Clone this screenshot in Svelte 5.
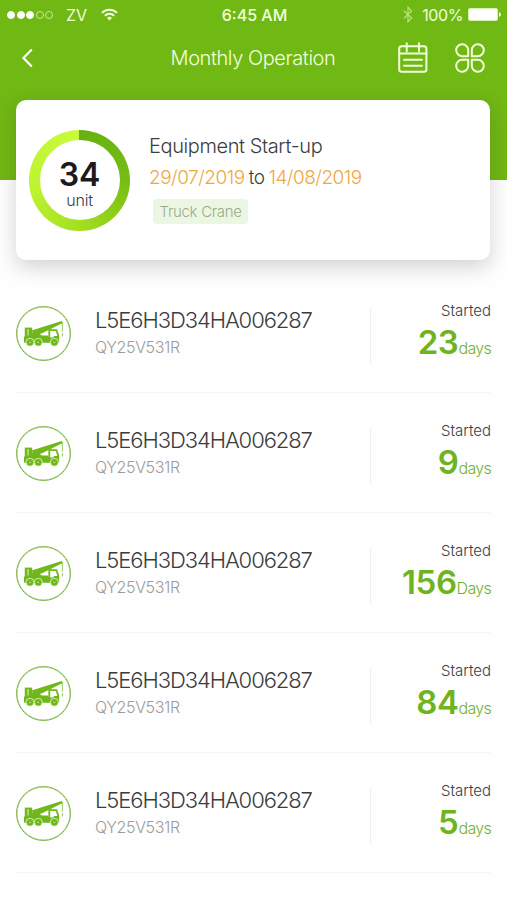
<script lang="ts">
	type Machine = { serial: string; model: string; count: number; unit: string };

	const serial = 'L5E6H3D34HA006287';
	const model = 'QY25V531R';

	let machines: Machine[] = [
		{ serial, model, count: 23, unit: 'days' },
		{ serial, model, count: 9, unit: 'days' },
		{ serial, model, count: 156, unit: 'Days' },
		{ serial, model, count: 84, unit: 'days' },
		{ serial, model, count: 5, unit: 'days' }
	];

	let signal = [true, true, true, false, false];
</script>

<main>
	<header>
		<div class="status">
			<div class="carrier">
				<div class="signal">
					{#each signal as on}
						<i class:on></i>
					{/each}
				</div>
				<span class="name">ZV</span>
				<svg width="17" height="13" viewBox="0 0 17 13" fill="none" stroke="#f2ffdf" stroke-width="2">
					<path d="M1 4.8a10.6 10.6 0 0 1 15 0" />
					<path d="M3.9 7.7a6.5 6.5 0 0 1 9.2 0" />
					<path d="M8.5 12.4 6 9.9a3.6 3.6 0 0 1 5 0z" fill="#f2ffdf" stroke="none" />
				</svg>
			</div>
			<span class="time">6:45 AM</span>
			<div class="power">
				<svg class="bluetooth" width="10" height="17" viewBox="0 0 10 17" fill="none" stroke="#b9e284" stroke-width="1.2">
					<path d="M1 4.7 8.6 12 5 15.8V1.2L8.6 5 1 12.3" />
				</svg>
				<span class="percent">100%</span>
				<svg width="34" height="13" viewBox="0 0 34 13">
					<rect x="0.5" y="0.5" width="29" height="12" rx="1.5" fill="#fff" stroke="#d6f0b0" />
					<path d="M31 4.2c2.4.4 2.4 4.2 0 4.6z" fill="#fff" />
				</svg>
			</div>
		</div>

		<nav>
			<svg class="back" width="12" height="20" viewBox="0 0 12 20" fill="none" stroke="#fff" stroke-width="2.2">
				<path d="M10.8 1.6 2.5 10l8.3 8.4" />
			</svg>
			<h1>Monthly Operation</h1>
			<div class="actions">
				<svg width="30" height="32" viewBox="0 0 30 32" fill="none" stroke="#f1ffdb" stroke-width="2" stroke-linecap="round">
					<rect x="1.2" y="4.2" width="27.2" height="25.6" rx="2.5" />
					<path d="M1.2 11.5h27.2M8.7 1.2v8M21 1.2v8M6 17.8h18M6 23.8h18" />
				</svg>
				<svg width="30" height="30" viewBox="0 0 30 30" fill="none" stroke="#f1ffdb" stroke-width="2" stroke-linejoin="round">
					<path d="M13.2 13.2H7.4a6 6 0 1 1 5.8-6z" />
					<path d="M16.8 13.2h5.8a6 6 0 1 0-5.8-6z" />
					<path d="M13.2 16.8H7.4a6 6 0 1 0 5.8 6z" />
					<path d="M16.8 16.8h5.8a6 6 0 1 1-5.8 6z" />
				</svg>
			</div>
		</nav>
	</header>

	<section class="card">
		<div class="ring">
			<div class="inner">
				<strong>34</strong>
				<span>unit</span>
			</div>
		</div>
		<div class="summary">
			<h2>Equipment Start-up</h2>
			<p class="range"><span class="date">29/07/2019</span><span class="to">to</span><span class="date">14/08/2019</span></p>
			<span class="tag">Truck Crane</span>
		</div>
	</section>

	<ul>
		{#each machines as machine}
			<li>
				<div class="avatar">
					<svg width="42" height="28" viewBox="0 0 42 28" fill="#6fb818">
						<!-- boom and hook -->
						<path d="M8.5 10.4 38.8 1l1 2L18.5 13.6l-6.5 1.6z" />
						<path d="M39.4 2.4v9.4M39.4 13v3.4" fill="none" stroke="#8cc850" stroke-width="0.9" />
						<!-- counterweight and chassis -->
						<path d="M1.8 7.6h7.4v10.9H1.8z" />
						<path d="M5 9v6.5" fill="none" stroke="#fff" stroke-width="0.8" />
						<path d="M9 12.5h5.5l4.5 3h6v7.3H1V16.5h8z" />
						<path d="M25.4 9.2H34l2.2 6.4v7.2H24.5v-6.3h.9z" />
						<path d="M27.2 10.9h5.6l1.6 5.1h-3.2l-1.2 1.4h-2.8z" fill="#fff" />
						<g stroke="#fff" stroke-width="0.7">
							<circle cx="7" cy="22.3" r="4" />
							<circle cx="15.3" cy="22.3" r="4" />
							<circle cx="31.4" cy="22.3" r="4" />
						</g>
						<g fill="#b9de8c">
							<circle cx="7" cy="22.3" r="0.9" />
							<circle cx="15.3" cy="22.3" r="0.9" />
							<circle cx="31.4" cy="22.3" r="0.9" />
						</g>
					</svg>
				</div>
				<div class="info">
					<span class="serial">{machine.serial}</span>
					<span class="model">{machine.model}</span>
				</div>
				<div class="started">
					<span class="label">Started</span>
					<p class="count"><b>{machine.count}</b><span>{machine.unit}</span></p>
				</div>
			</li>
		{/each}
	</ul>
</main>

<style>
	:global(body) {
		background: #fff;
	}

	main {
		width: 507px;
		height: 900px;
		overflow: hidden;
		font-family: Inter, 'Liberation Sans', sans-serif;
		font-weight: 300;
		color: #3c3c3c;
		background: #fefefe;
	}
	h1,
	h2,
	p,
	ul {
		margin: 0;
		padding: 0;
		font-weight: 300;
	}
	svg {
		display: block;
		flex: none;
	}
	span {
		white-space: nowrap;
	}

	header {
		height: 180px;
		background: #70b814;
		color: #f0ffdc;
	}
	.status {
		display: grid;
		grid-template-columns: 1fr auto 1fr;
		align-items: center;
		height: 29px;
		padding: 0 5px 0 7px;
	}
	.carrier,
	.power {
		display: flex;
		align-items: center;
	}
	.power {
		justify-content: flex-end;
	}
	.signal {
		display: flex;
		gap: 1.5px;
	}
	.signal i {
		box-sizing: border-box;
		width: 8px;
		height: 8px;
		border: 1px solid #c8eb9b;
		border-radius: 50%;
	}
	.signal .on {
		border-color: #fff;
		background: #fff;
	}
	.name {
		margin: 0 14px 0 13px;
		font-size: 16px;
		font-weight: 400;
	}
	.time {
		font-size: 16px;
		font-weight: 500;
	}
	.bluetooth {
		margin-right: 9px;
	}
	.percent {
		margin-right: 5px;
		font-size: 16px;
		font-weight: 400;
		letter-spacing: -0.4px;
	}

	nav {
		display: grid;
		grid-template-columns: 1fr auto 1fr;
		align-items: center;
		height: 58px;
		padding: 0 22px 0 21px;
	}
	h1 {
		font-size: 20px;
		line-height: 24px;
		letter-spacing: -0.43px;
	}
	.actions {
		display: flex;
		align-items: center;
		justify-content: flex-end;
		gap: 27px;
	}

	.card {
		position: relative;
		display: flex;
		align-items: center;
		box-sizing: border-box;
		width: 474px;
		height: 160px;
		margin: -80px 0 0 16px;
		padding-left: 13px;
		border-radius: 10px;
		background: #fff;
		box-shadow: 0 7px 20px rgba(50, 30, 40, 0.2);
	}
	.ring {
		display: flex;
		align-items: center;
		justify-content: center;
		width: 101px;
		height: 101px;
		border-radius: 50%;
		background: conic-gradient(#66b011, #76bd14 25%, #a4df20 50%, #bdf32f 72%, #c9fb3c);
	}
	.inner {
		display: flex;
		flex-direction: column;
		align-items: center;
		justify-content: center;
		box-sizing: border-box;
		width: 80px;
		height: 80px;
		padding-top: 7px;
		border-radius: 50%;
		background: #fff;
	}
	.inner strong {
		font-size: 32px;
		font-weight: 600;
		line-height: 32px;
		color: #1c1a1d;
	}
	.inner span {
		font-size: 16px;
		line-height: 18px;
		letter-spacing: -0.2px;
	}
	.summary {
		padding-left: 19px;
	}
	h2 {
		font-size: 20px;
		line-height: 24px;
		letter-spacing: -0.4px;
	}
	.range {
		display: flex;
		gap: 4px;
		margin-top: 8px;
		font-size: 19px;
		line-height: 24px;
		letter-spacing: -0.5px;
	}
	.date {
		color: #f0a741;
	}
	.tag {
		display: block;
		width: fit-content;
		margin: 9px 0 2px 4px;
		padding: 0 6.5px;
		border-radius: 4px;
		font-size: 15px;
		line-height: 25px;
		letter-spacing: -0.3px;
		color: #9bab8c;
		background: #ebf7e2;
	}

	ul {
		margin: 13px 16px 0;
		list-style: none;
	}
	li {
		display: flex;
		align-items: center;
		box-sizing: border-box;
		height: 120px;
		border-bottom: 1px solid #f4f4f4;
	}
	.avatar {
		display: flex;
		align-items: center;
		justify-content: center;
		box-sizing: border-box;
		width: 55px;
		height: 55px;
		margin-top: 2px;
		border: 1.5px solid #7fb345;
		border-radius: 50%;
		box-shadow: inset 0 0 0 0.5px #a5cd77;
	}
	.info {
		display: flex;
		flex: 1;
		flex-direction: column;
		padding-left: 24px;
	}
	.serial {
		font-size: 22px;
		line-height: 28px;
		letter-spacing: -1.08px;
	}
	.model {
		font-size: 16px;
		line-height: 26px;
		letter-spacing: -0.35px;
		color: #9c9c9c;
	}
	.started {
		box-sizing: border-box;
		width: 121px;
		height: 56px;
		margin-top: 7px;
		border-left: 1.5px solid #f0f0f0;
		text-align: right;
	}
	.label {
		display: block;
		margin: -8px 0 0 0;
		font-size: 15px;
		line-height: 22px;
	}
	.count {
		line-height: 41px;
		color: #6fb41e;
	}
	.count b {
		font-size: 33px;
		font-weight: 600;
		letter-spacing: -0.4px;
	}
	.count span {
		font-size: 16px;
		letter-spacing: -0.7px;
	}
</style>
